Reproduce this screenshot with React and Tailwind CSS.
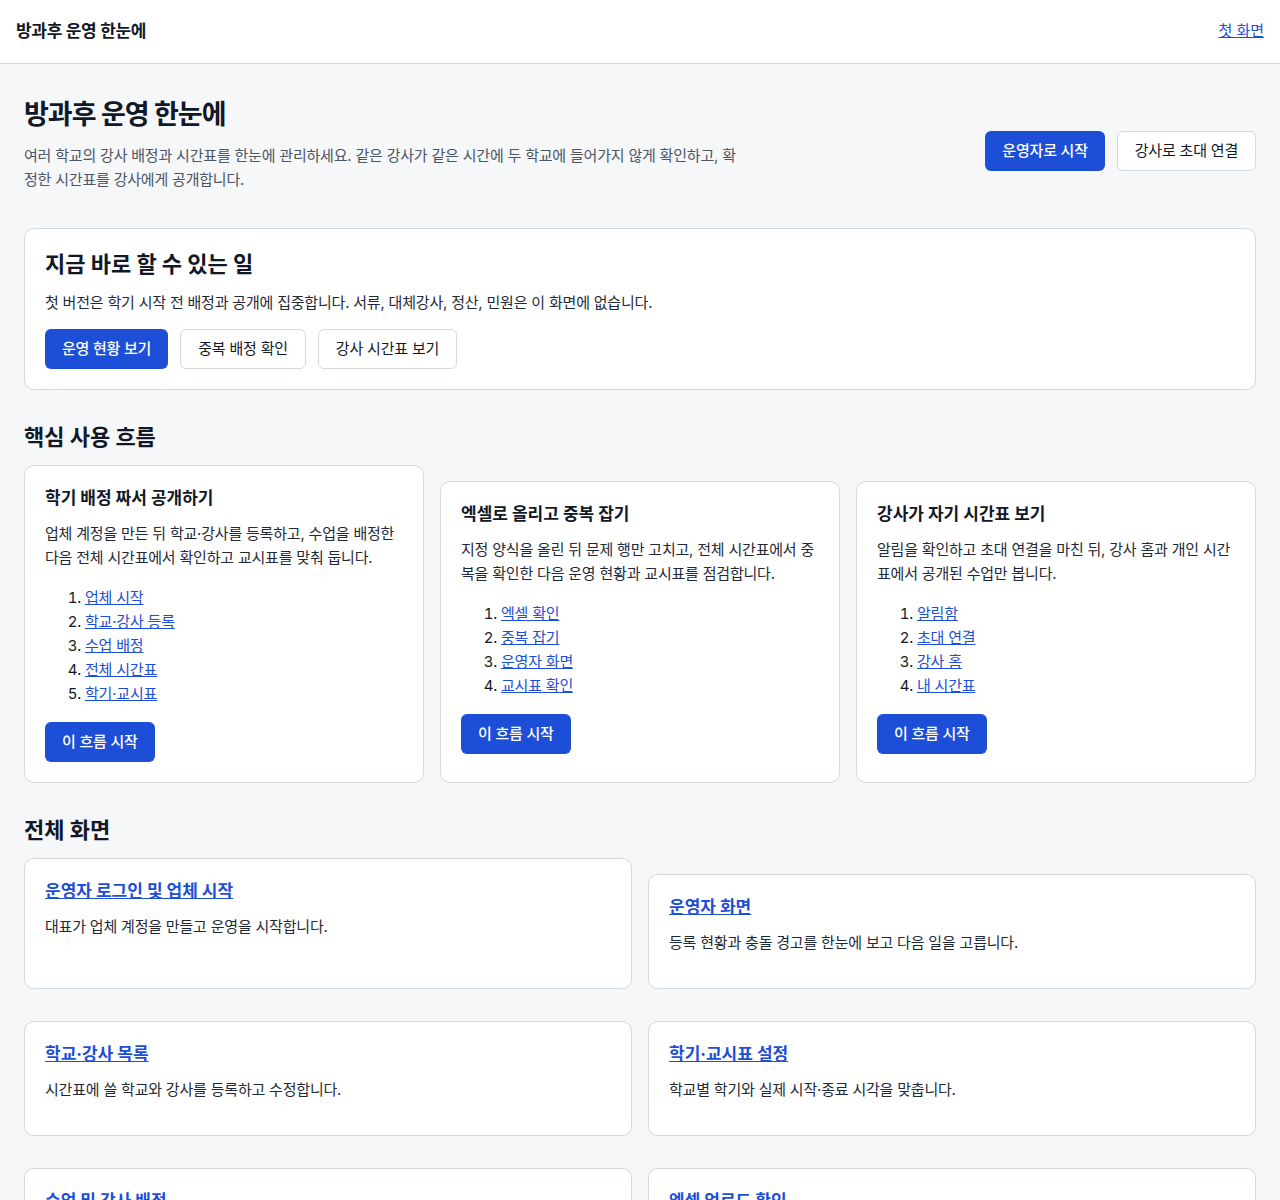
import React from 'react';

const flows = [
  {
    title: '학기 배정 짜서 공개하기',
    desc: '업체 계정을 만든 뒤 학교·강사를 등록하고, 수업을 배정한 다음 전체 시간표에서 확인하고 교시표를 맞춰 둡니다.',
    steps: ['업체 시작', '학교·강사 등록', '수업 배정', '전체 시간표', '학기·교시표'],
  },
  {
    title: '엑셀로 올리고 중복 잡기',
    desc: '지정 양식을 올린 뒤 문제 행만 고치고, 전체 시간표에서 중복을 확인한 다음 운영 현황과 교시표를 점검합니다.',
    steps: ['엑셀 확인', '중복 잡기', '운영자 화면', '교시표 확인'],
  },
  {
    title: '강사가 자기 시간표 보기',
    desc: '알림을 확인하고 초대 연결을 마친 뒤, 강사 홈과 개인 시간표에서 공개된 수업만 봅니다.',
    steps: ['알림함', '초대 연결', '강사 홈', '내 시간표'],
  },
];

const screens = [
  { title: '운영자 로그인 및 업체 시작', desc: '대표가 업체 계정을 만들고 운영을 시작합니다.' },
  { title: '운영자 화면', desc: '등록 현황과 충돌 경고를 한눈에 보고 다음 일을 고릅니다.' },
  { title: '학교·강사 목록', desc: '시간표에 쓸 학교와 강사를 등록하고 수정합니다.' },
  { title: '학기·교시표 설정', desc: '학교별 학기와 실제 시작·종료 시각을 맞춥니다.' },
  { title: '수업 및 강사 배정', desc: '학교별 수업에 강사를 배정하고 겹치는 시간을 확인합니다.' },
  { title: '엑셀 업로드 확인', desc: '지정 양식으로 올린 배정표에서 문제 행을 확인합니다.' },
];

const primaryBtn =
  'inline-flex h-10 items-center rounded-md bg-[#1d4ed8] px-[17px] text-[15px] tracking-[-0.2px] font-medium text-white';
const outlineBtn =
  'inline-flex h-10 items-center rounded-md border border-[#d4d8e0] bg-white px-[17px] text-[15px] tracking-[-0.2px] text-[#111827]';

const App = () => {
  return (
    <div className="min-h-screen bg-[#f6f7f9] font-['Inter','Noto_Sans_CJK_KR',sans-serif] text-[#1f2937]">
      <header className="flex h-16 items-center justify-between border-b border-[#d4d8e0] bg-white px-4">
        <span className="text-[17px] tracking-[-0.3px] font-bold text-[#111827]">방과후 운영 한눈에</span>
        <a href="#" className="text-[15px] text-[#1d4ed8] underline">
          첫 화면
        </a>
      </header>

      <main className="px-6 pt-[34px] pb-10">
        <div className="flex items-center justify-between">
          <div>
            <h1 className="text-[27px] leading-[34px] tracking-[-1px] font-bold text-[#111827]">방과후 운영 한눈에</h1>
            <p className="mt-3 mb-3 max-w-[720px] text-[15px] leading-6 tracking-[-0.2px] text-[#4b5563]">
              여러 학교의 강사 배정과 시간표를 한눈에 관리하세요. 같은 강사가 같은 시간에 두 학교에 들어가지 않게 확인하고, 확정한 시간표를 강사에게 공개합니다.
            </p>
          </div>
          <div className="flex gap-3">
            <button className={primaryBtn}>운영자로 시작</button>
            <button className={outlineBtn}>강사로 초대 연결</button>
          </div>
        </div>

        <section className="mt-6 rounded-[10px] border border-[#d4d8e0] bg-white p-5">
          <h2 className="text-[22px] leading-[30px] font-bold text-[#111827]">지금 바로 할 수 있는 일</h2>
          <p className="mt-3 text-[15px] leading-6 tracking-[-0.2px]">
            첫 버전은 학기 시작 전 배정과 공개에 집중합니다. 서류, 대체강사, 정산, 민원은 이 화면에 없습니다.
          </p>
          <div className="mt-3.5 flex gap-3">
            <button className={primaryBtn}>운영 현황 보기</button>
            <button className={outlineBtn}>중복 배정 확인</button>
            <button className={outlineBtn}>강사 시간표 보기</button>
          </div>
        </section>

        <h2 className="mt-8 text-[22px] leading-[30px] font-bold text-[#111827]">핵심 사용 흐름</h2>
        <div className="mt-[13px] grid grid-cols-3 gap-4">
          {flows.map((f, i) => (
            <div
              key={f.title}
              className={`flex flex-col items-start rounded-[10px] border border-[#d4d8e0] bg-white px-5 pt-[21px] pb-5 ${i > 0 ? 'mt-4' : ''}`}
            >
              <h3 className="text-[17px] leading-[22px] font-bold text-[#111827]">{f.title}</h3>
              <p className="mt-[13px] text-[15px] leading-6 tracking-[-0.2px]">{f.desc}</p>
              <ol className="mt-4 list-decimal pl-10 text-[15px] leading-6 tracking-[-0.2px] text-[#111827]">
                {f.steps.map((s) => (
                  <li key={s}>
                    <a href="#" className="text-[#1d4ed8] underline">
                      {s}
                    </a>
                  </li>
                ))}
              </ol>
              <button className={`${primaryBtn} mt-4`}>이 흐름 시작</button>
            </div>
          ))}
        </div>

        <h2 className="mt-8 text-[22px] leading-[30px] font-bold text-[#111827]">전체 화면</h2>
        <div className="mt-[13px] grid grid-cols-2 gap-4">
          {screens.map((s, i) => (
            <div
              key={s.title}
              className={`rounded-[10px] border border-[#d4d8e0] bg-white px-5 pt-5 pb-[33px] ${i > 0 ? 'mt-4' : ''}`}
            >
              <a href="#" className="text-[17px] leading-[22px] font-bold text-[#1d4ed8] underline">
                {s.title}
              </a>
              <p className="mt-3 text-[15px] leading-6 tracking-[-0.2px]">{s.desc}</p>
            </div>
          ))}
        </div>
      </main>
    </div>
  );
};

export default App;
